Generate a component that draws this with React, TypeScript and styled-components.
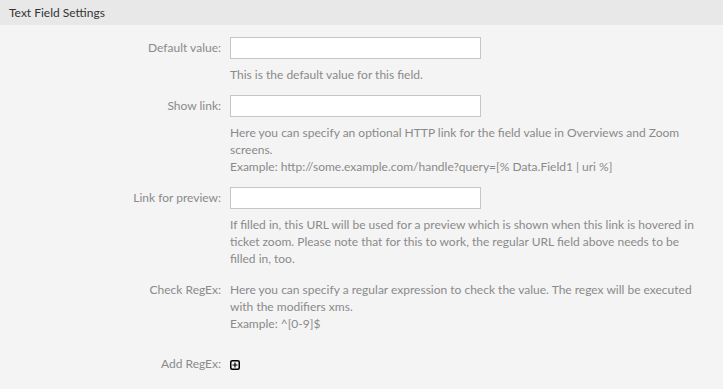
import styled, { createGlobalStyle } from "styled-components";

const GlobalStyle = createGlobalStyle`
  html, body {
    margin: 0;
    padding: 0;
    background: #f4f4f4;
  }
  body {
    font-family: Lato, "Open Sans", sans-serif;
    font-size: 12px;
  }
`;

const Panel = styled.section`
  width: 723px;
  min-height: 389px;
  background: #f4f4f4;
`;

const PanelHeader = styled.h2`
  margin: 0;
  height: 25px;
  line-height: 25px;
  padding-left: 9px;
  background: #e8e8e8;
  color: #333;
  font-size: 12px;
  font-weight: normal;
`;

const Fields = styled.div`
  display: grid;
  grid-template-columns: 221px 1fr;
  column-gap: 9px;
  padding-top: 12px;
`;

const Label = styled.label<{ $inline?: boolean }>`
  text-align: right;
  color: #8a8a8a;
  line-height: ${(p) => (p.$inline ? "17px" : "22px")};
`;

const Value = styled.div<{ $space: number }>`
  margin-bottom: ${(p) => p.$space}px;
`;

const TextInput = styled.input`
  display: block;
  box-sizing: border-box;
  width: 251px;
  height: 22px;
  margin: 0;
  border: 1px solid #c6c6c6;
  background: #fff;
  font: inherit;
`;

const Help = styled.p<{ $inline?: boolean }>`
  margin: ${(p) => (p.$inline ? "0" : "7px 0 0")};
  max-width: 470px;
  line-height: 17px;
  color: #8a8a8a;
`;

const AddButton = styled.button`
  display: block;
  padding: 0;
  margin: 3px 0 0;
  border: 0;
  background: none;
  width: 10px;
  height: 10px;
  cursor: pointer;
`;

function PlusSquare() {
  return (
    <svg width="10" height="10" viewBox="0 0 10 10" fill="none">
      <rect x="0.75" y="0.75" width="8.5" height="8.5" rx="1.5" stroke="#000" strokeWidth="1.5" />
      <path d="M5 2.5v5M2.5 5h5" stroke="#000" strokeWidth="1.2" />
    </svg>
  );
}

export default function App() {
  return (
    <>
      <GlobalStyle />
      <Panel>
        <PanelHeader>Text Field Settings</PanelHeader>
        <Fields>
          <Label htmlFor="default-value">Default value:</Label>
          <Value $space={12}>
            <TextInput id="default-value" type="text" />
            <Help>This is the default value for this field.</Help>
          </Value>

          <Label htmlFor="show-link">Show link:</Label>
          <Value $space={12}>
            <TextInput id="show-link" type="text" />
            <Help>
              Here you can specify an optional HTTP link for the field value in Overviews and Zoom
              screens.
              <br />
              Example: http://some.example.com/handle?query=[% Data.Field1 | uri %]
            </Help>
          </Value>

          <Label htmlFor="link-preview">Link for preview:</Label>
          <Value $space={14}>
            <TextInput id="link-preview" type="text" />
            <Help>
              If filled in, this URL will be used for a preview which is shown when this link is
              hovered in ticket zoom. Please note that for this to work, the regular URL field
              above needs to be filled in, too.
            </Help>
          </Value>

          <Label $inline>Check RegEx:</Label>
          <Value $space={23}>
            <Help $inline>
              Here you can specify a regular expression to check the value. The regex will be
              executed with the modifiers xms.
              <br />
              Example: ^[0-9]$
            </Help>
          </Value>

          <Label $inline>Add RegEx:</Label>
          <Value $space={12}>
            <AddButton type="button" aria-label="Add RegEx">
              <PlusSquare />
            </AddButton>
          </Value>
        </Fields>
      </Panel>
    </>
  );
}
